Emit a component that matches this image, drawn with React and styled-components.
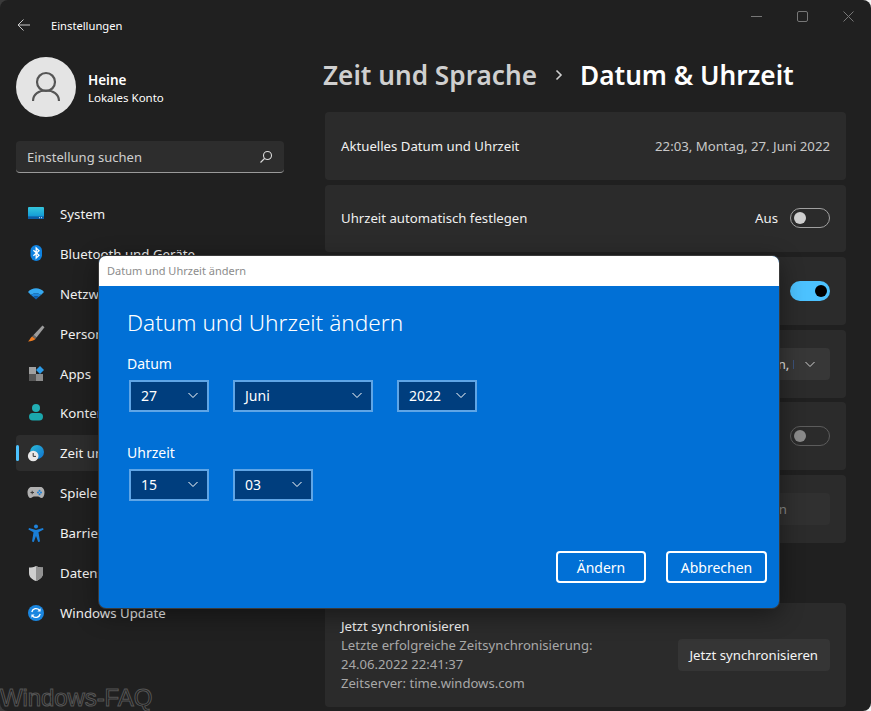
import React from 'react'
import styled, { createGlobalStyle } from 'styled-components'

const Global = createGlobalStyle`
  html, body { margin: 0; padding: 0; background: linear-gradient(90deg, #3a3a3a 0%, #3a3a3a 50%, #f4f4f4 100%); }
  body { font-family: "Noto Sans", "Open Sans", sans-serif; }
  * { box-sizing: border-box; }
`

const Window = styled.div`
  position: relative;
  width: 871px;
  height: 711px;
  display: flex;
  overflow: hidden;
  background: #202020;
  border-radius: 8px;
  color: #fff;
`

const Sidebar = styled.aside`
  width: 300px;
  padding: 0 16px;
  flex: none;
`

const TitleBar = styled.div`
  height: 50px;
  display: flex;
  align-items: center;
  gap: 20px;
  padding-left: 1px;
  font-size: 11.2px;
`

const Profile = styled.div`
  margin-top: 7px;
  display: flex;
  align-items: center;
  gap: 12px;
`

const Avatar = styled.div`
  width: 60px;
  height: 60px;
  border-radius: 50%;
  background: #e4e4e4;
  display: flex;
  align-items: center;
  justify-content: center;
`

const ProfileName = styled.div`
  margin-top: 3px;
  font-size: 13.5px;
  font-weight: 600;
  line-height: 18px;
`

const ProfileKind = styled.div`
  font-size: 11.5px;
  line-height: 17px;
`

const Search = styled.div`
  margin-top: 24px;
  height: 32px;
  display: flex;
  align-items: center;
  justify-content: space-between;
  padding: 0 11px;
  font-size: 13px;
  color: #cfcfcf;
  background: #2d2d2d;
  border-radius: 4px;
  border-bottom: 1px solid #9a9a9a;
`

const NavList = styled.nav`
  margin-top: 23px;
  display: flex;
  flex-direction: column;
  gap: 3.9px;
`

const NavItem = styled.div`
  position: relative;
  height: 36px;
  display: flex;
  align-items: center;
  gap: 14px;
  padding-left: 10px;
  font-size: 13.25px;
  color: #f2f2f2;
  border-radius: 4px;
  background: ${p => (p.$active ? '#2d2d2d' : 'transparent')};
  ${p => p.$active && `
    &::before {
      content: '';
      position: absolute;
      left: 0;
      top: 10px;
      width: 3px;
      height: 16px;
      border-radius: 2px;
      background: #4cc2ff;
    }
  `}
`

const Main = styled.main`
  flex: 1;
  padding: 0 25px 0 25px;
  min-width: 0;
`

const Controls = styled.div`
  height: 32px;
  display: flex;
  justify-content: flex-end;
  align-items: center;
  gap: 35px;
  margin-right: -8px;
`

const PageTitle = styled.h1`
  margin: 24px 0 0 -2px;
  height: 38px;
  display: flex;
  align-items: center;
  font-size: 26.2px;
  font-weight: 600;
  white-space: nowrap;
`

const Parent = styled.span`
  color: #cfcfcf;
`

const Crumb = styled.span`
  width: 43px;
  display: flex;
  justify-content: center;
`

const Cards = styled.div`
  margin-top: 18px;
  display: flex;
  flex-direction: column;
  gap: 4.8px;
`

const Card = styled.div`
  height: ${p => p.$height || '67.8px'};
  display: flex;
  align-items: center;
  justify-content: space-between;
  padding: 0 16px;
  background: #2b2b2b;
  border-radius: 4px;
  font-size: 13.2px;
  color: #f0f0f0;
`

const Value = styled.span`
  color: #c8c8c8;
`

const Right = styled.div`
  display: flex;
  align-items: center;
  gap: 12px;
`

const Toggle = styled.div`
  position: relative;
  width: 40px;
  height: 20px;
  border-radius: 10px;
  border: ${p => (p.$on ? 'none' : `1px solid ${p.$disabled ? '#5c5c5c' : '#a0a0a0'}`)};
  background: ${p => (p.$on ? '#4cc2ff' : 'transparent')};

  &::after {
    content: '';
    position: absolute;
    top: ${p => (p.$on ? '4px' : '3px')};
    left: ${p => (p.$on ? '25px' : '3px')};
    width: 12px;
    height: 12px;
    border-radius: 50%;
    background: ${p => (p.$on ? '#000' : p.$disabled ? '#8a8a8a' : '#cfcfcf')};
  }
`

const Combo = styled.div`
  width: 286px;
  height: 32px;
  display: flex;
  align-items: center;
  justify-content: space-between;
  padding: 0 14px 0 12px;
  border-radius: 4px;
  background: #373737;
  white-space: nowrap;
  overflow: hidden;
`

const ComboText = styled.span`
  display: block;
  width: 238px;
  overflow: hidden;
  color: #e8e8e8;
`

const GhostButton = styled.div`
  width: ${p => p.$width || 'auto'};
  height: 32px;
  padding: 0 12px;
  display: flex;
  align-items: center;
  justify-content: center;
  border-radius: 4px;
  background: ${p => (p.$disabled ? '#303030' : '#353535')};
  color: ${p => (p.$disabled ? '#8a8a8a' : '#f4f4f4')};
  white-space: nowrap;
`

const SectionTitle = styled.h2`
  margin: 0;
  height: 50.6px;
  display: flex;
  align-items: flex-end;
  padding-bottom: 8px;
  font-size: 14px;
  font-weight: 600;
`

const SyncCopy = styled.div`
  line-height: 19px;
  padding-top: 1px;
`

const SyncHint = styled.div`
  color: #a8a8a8;
  font-size: 13.1px;
`

const Dialog = styled.div`
  position: absolute;
  left: 99px;
  top: 256px;
  width: 680px;
  height: 352px;
  border-radius: 7px;
  overflow: hidden;
  background: #0170d6;
  box-shadow: 0 0 0 1px #3a3a3a, 0 6px 24px rgba(0, 0, 0, 0.45);
`

const DialogBar = styled.div`
  height: 30px;
  display: flex;
  align-items: center;
  padding: 0 0 2px 8px;
  background: #fff;
  color: #8c8c8c;
  font-size: 11px;
`

const DialogBody = styled.div`
  padding: 20px 12px 0 28px;
  position: relative;
  height: 322px;
`

const DialogTitle = styled.h3`
  margin: 0;
  font-size: 22.6px;
  line-height: 34px;
  font-weight: 300;
`

const FieldLabel = styled.div`
  margin-top: ${p => p.$top || '0'};
  font-size: 14px;
  line-height: 20px;
`

const FieldRow = styled.div`
  margin: 6px 0 0 2px;
  display: flex;
  gap: 24px;
`

const Select = styled.div`
  width: ${p => p.$width || '80px'};
  height: 32px;
  display: flex;
  align-items: center;
  justify-content: space-between;
  padding: 0 8px 2px 10px;
  background: #003e7e;
  border: 2px solid #5fa5e6;
  font-size: 14px;
`

const Actions = styled.div`
  position: absolute;
  right: 12px;
  bottom: 25px;
  display: flex;
  gap: 20px;
`

const OutlineButton = styled.div`
  width: ${p => p.$width};
  height: 32px;
  display: flex;
  align-items: center;
  justify-content: center;
  border: 2px solid #fff;
  border-radius: 4px;
  font-size: 14px;
`

const Watermark = styled.div`
  position: absolute;
  left: 0;
  bottom: 0;
  font-family: "Liberation Sans", sans-serif;
  font-size: 24px;
  line-height: 26px;
  letter-spacing: -0.1px;
  color: #1a1a1a;
  -webkit-text-stroke: 1px #555;
`

const Chevron = ({ color = '#fff', size = 12 }) => (
  <svg width={size} height={size} viewBox="0 0 12 12" fill="none">
    <path d="M1.5 4 L6 8.5 L10.5 4" stroke={color} strokeWidth="1" />
  </svg>
)

const icons = {
  system: (
    <svg width="20" height="20" viewBox="0 0 20 20">
      <defs>
        <linearGradient id="sys" x1="0" y1="0" x2="0" y2="1">
          <stop offset="0" stopColor="#35c6dc" />
          <stop offset="0.7" stopColor="#16a0d8" />
          <stop offset="1" stopColor="#0b5aa8" />
        </linearGradient>
      </defs>
      <rect x="2" y="3" width="16" height="12" rx="1" fill="url(#sys)" />
      <rect x="2" y="12.5" width="16" height="2.5" fill="#0d5ea8" />
      <path d="M13 13.7 H14 M15 13.7 H16" stroke="#cfe6f5" strokeWidth="1" />
    </svg>
  ),
  bluetooth: (
    <svg width="20" height="20" viewBox="0 0 20 20">
      <rect x="4.5" y="1" width="11.5" height="16" rx="5.7" fill="#0f82e0" />
      <path d="M7.4 6.3 L13 11.3 L10.2 14 V4 L13 6.7 L7.4 11.7" fill="none" stroke="#fff" strokeWidth="1.3" />
    </svg>
  ),
  wifi: (
    <svg width="20" height="20" viewBox="0 0 20 20">
      <path d="M2 8 C6 3 14 3 18 8 L15 11 C12 8.5 8 8.5 5 11 Z" fill="#35a8f0" />
      <path d="M5 11 C8 8.5 12 8.5 15 11 L12.7 13 C11 12 9 12 7.3 13 Z" fill="#1c86dc" />
      <path d="M7.3 13 C9 12 11 12 12.7 13 L10 15.5 Z" fill="#0f62b4" />
    </svg>
  ),
  brush: (
    <svg width="20" height="20" viewBox="0 0 20 20">
      <path d="M16.5 1.5 L18.5 3.2 L10.5 13.5 L7.5 11 Z" fill="#9c9c9c" />
      <path d="M7.5 11 L10.5 13.5 L9.5 15 L6 12.5 Z" fill="#6a6a6a" />
      <path d="M6 12.5 L9.5 15 C8 16.5 5 17.5 2 17.5 C4 16 4 14 6 12.5 Z" fill="#ef7d22" />
    </svg>
  ),
  apps: (
    <svg width="20" height="20" viewBox="0 0 20 20">
      <rect x="3" y="3" width="7" height="7" fill="#a0a0a0" />
      <rect x="3" y="10" width="7" height="7" fill="#575757" />
      <rect x="10" y="10" width="7" height="7" fill="#8c8c8c" />
      <path d="M14 2 L18 6 L14 10 L10 6 Z" fill="#2c9be8" />
    </svg>
  ),
  account: (
    <svg width="20" height="20" viewBox="0 0 20 20">
      <circle cx="10" cy="5" r="4" fill="#22aeb4" />
      <rect x="3" y="10" width="14" height="7.5" rx="3.7" fill="#1ba7ad" />
    </svg>
  ),
  time: (
    <svg width="20" height="20" viewBox="0 0 20 20">
      <defs>
        <linearGradient id="globe" x1="0" y1="0" x2="1" y2="1">
          <stop offset="0" stopColor="#2bbcd8" />
          <stop offset="1" stopColor="#1072d0" />
        </linearGradient>
      </defs>
      <circle cx="11" cy="9" r="7" fill="url(#globe)" />
      <circle cx="7.2" cy="13" r="5.3" fill="#e8e8e8" />
      <path d="M7.2 10 V13.4 H10" fill="none" stroke="#333" strokeWidth="1" />
    </svg>
  ),
  gaming: (
    <svg width="20" height="20" viewBox="0 0 20 20">
      <path d="M5.5 4 H14.5 C17 4 18.5 6.5 18.5 9.5 C18.5 13 17 15 15.5 15 C14 15 13.5 13.5 12 13.5 H8 C6.5 13.5 6 15 4.5 15 C3 15 1.5 13 1.5 9.5 C1.5 6.5 3 4 5.5 4 Z" fill="#b0b0b0" />
      <path d="M4.5 9.5 H8 M6.2 7.8 V11.2" stroke="#3a3a3a" strokeWidth="1" />
      <circle cx="13.5" cy="7.8" r="1" fill="#1a80d8" />
      <circle cx="13.5" cy="11.2" r="1" fill="#1a80d8" />
      <circle cx="12" cy="9.5" r="1" fill="#1a80d8" />
      <circle cx="15" cy="9.5" r="1" fill="#1a80d8" />
    </svg>
  ),
  access: (
    <svg width="20" height="20" viewBox="0 0 20 20">
      <circle cx="10" cy="3.5" r="2" fill="#1f84dc" />
      <path d="M3 5 L10 7 L17 5 L17.6 6.6 L12.5 9.2 L14 18.5 L12.2 19 L10 13 L7.8 19 L6 18.5 L7.5 9.2 L2.4 6.6 Z" fill="#1a7fd8" />
    </svg>
  ),
  privacy: (
    <svg width="20" height="20" viewBox="0 0 20 20">
      <path d="M10 3 C12 4 14.5 4.5 17 4.5 V10 C17 14 14 16.5 10 18 C6 16.5 3 14 3 10 V4.5 C5.5 4.5 8 4 10 3 Z" fill="#cfcfcf" />
      <path d="M10 3 C12 4 14.5 4.5 17 4.5 V10 C17 14 14 16.5 10 18 Z" fill="#929292" />
    </svg>
  ),
  update: (
    <svg width="20" height="20" viewBox="0 0 20 20">
      <circle cx="10" cy="10" r="8" fill="#1a86e0" />
      <path d="M5.8 9 A4.4 4.4 0 0 1 13.5 7.2 M14.2 11 A4.4 4.4 0 0 1 6.5 12.8" fill="none" stroke="#fff" strokeWidth="1.3" />
      <path d="M14.6 5.2 V8.4 H11.4 Z M5.4 14.8 V11.6 H8.6 Z" fill="#fff" />
    </svg>
  ),
}

const navItems = [
  ['system', 'System'],
  ['bluetooth', 'Bluetooth und Geräte'],
  ['wifi', 'Netzwerk und Internet'],
  ['brush', 'Personalisierung'],
  ['apps', 'Apps'],
  ['account', 'Konten'],
  ['time', 'Zeit und Sprache', true],
  ['gaming', 'Spielen'],
  ['access', 'Barrierefreiheit'],
  ['privacy', 'Datenschutz und Sicherheit'],
  ['update', 'Windows Update'],
]

export default function App() {
  return (
    <Window>
      <Global />
      <Sidebar>
        <TitleBar>
          <svg width="14" height="14" viewBox="0 0 14 14" fill="none" stroke="#c8c8c8" strokeWidth="1">
            <path d="M13 7 H1 M6.5 1.5 L1 7 L6.5 12.5" />
          </svg>
          Einstellungen
        </TitleBar>
        <Profile>
          <Avatar>
            <svg width="32" height="34" viewBox="0 0 32 34" fill="none" stroke="#555" strokeWidth="2.2">
              <circle cx="16" cy="12" r="9" />
              <path d="M3 31 C3 24 9 20.5 16 20.5 C23 20.5 29 24 29 31" />
            </svg>
          </Avatar>
          <div>
            <ProfileName>Heine</ProfileName>
            <ProfileKind>Lokales Konto</ProfileKind>
          </div>
        </Profile>
        <Search>
          Einstellung suchen
          <svg width="14" height="14" viewBox="0 0 14 14" fill="none" stroke="#dcdcdc" strokeWidth="1.1">
            <circle cx="8.5" cy="5.5" r="4" />
            <path d="M5.5 8.5 L1.5 12.5" />
          </svg>
        </Search>
        <NavList>
          {navItems.map(([icon, label, active]) => (
            <NavItem key={icon} $active={active}>
              {icons[icon]}
              {label}
            </NavItem>
          ))}
        </NavList>
      </Sidebar>
      <Main>
        <Controls>
          <svg width="11" height="11" viewBox="0 0 11 11" stroke="#777" fill="none"><path d="M0 5.5 H11" /></svg>
          <svg width="11" height="11" viewBox="0 0 11 11" stroke="#777" fill="none"><rect x=".5" y=".5" width="10" height="10" rx="1.5" /></svg>
          <svg width="11" height="11" viewBox="0 0 11 11" stroke="#777" fill="none"><path d="M.5 .5 L10.5 10.5 M10.5 .5 L.5 10.5" /></svg>
        </Controls>
        <PageTitle>
          <Parent>Zeit und Sprache</Parent>
          <Crumb>
            <svg width="10" height="12" viewBox="0 0 10 12" fill="none" stroke="#cfcfcf" strokeWidth="1.6">
              <path d="M2.5 1.5 L7 6 L2.5 10.5" />
            </svg>
          </Crumb>
          Datum &amp; Uhrzeit
        </PageTitle>
        <Cards>
          <Card>
            Aktuelles Datum und Uhrzeit
            <Value>22:03, Montag, 27. Juni 2022</Value>
          </Card>
          <Card>
            Uhrzeit automatisch festlegen
            <Right>Aus <Toggle /></Right>
          </Card>
          <Card>
            Zeitzone automatisch festlegen
            <Right>Ein <Toggle $on /></Right>
          </Card>
          <Card>
            Zeitzone
            <Combo>
              <ComboText>(UTC+01:00) Amsterdam, Berlin, Bern, Rom</ComboText>
              <Chevron color="#cfcfcf" />
            </Combo>
          </Card>
          <Card>
            Sommerzeit automatisch anpassen
            <Right>Aus <Toggle $disabled /></Right>
          </Card>
          <Card>
            Datum und Uhrzeit manuell festlegen
            <GhostButton $disabled $width="132px">Ändern</GhostButton>
          </Card>
          <SectionTitle>Zusätzliche Einstellungen</SectionTitle>
          <Card $height="104px">
            <SyncCopy>
              Jetzt synchronisieren
              <SyncHint>
                Letzte erfolgreiche Zeitsynchronisierung:<br />
                24.06.2022 22:41:37<br />
                Zeitserver: time.windows.com
              </SyncHint>
            </SyncCopy>
            <GhostButton>Jetzt synchronisieren</GhostButton>
          </Card>
        </Cards>
      </Main>
      <Dialog>
        <DialogBar>Datum und Uhrzeit ändern</DialogBar>
        <DialogBody>
          <DialogTitle>Datum und Uhrzeit ändern</DialogTitle>
          <FieldLabel $top="14px">Datum</FieldLabel>
          <FieldRow>
            <Select>27 <Chevron /></Select>
            <Select $width="140px">Juni <Chevron /></Select>
            <Select>2022 <Chevron /></Select>
          </FieldRow>
          <FieldLabel $top="31px">Uhrzeit</FieldLabel>
          <FieldRow>
            <Select>15 <Chevron /></Select>
            <Select>03 <Chevron /></Select>
          </FieldRow>
          <Actions>
            <OutlineButton $width="90px">Ändern</OutlineButton>
            <OutlineButton $width="101px">Abbrechen</OutlineButton>
          </Actions>
        </DialogBody>
      </Dialog>
      <Watermark>Windows-FAQ</Watermark>
    </Window>
  )
}
